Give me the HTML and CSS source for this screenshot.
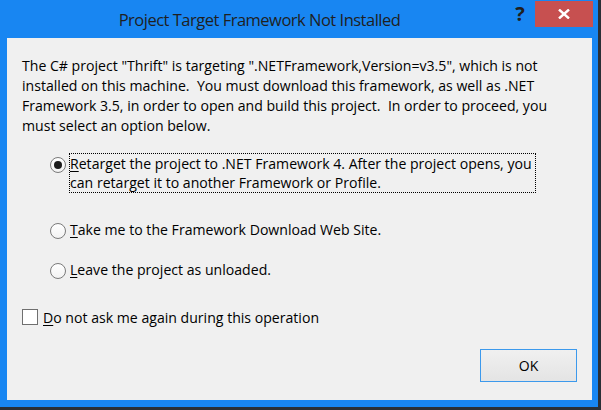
FILE: index.html
```html
<!DOCTYPE html>
<html lang="en">
<head>
<meta charset="utf-8">
<title>Project Target Framework Not Installed</title>
<link rel="stylesheet" href="styles.css">
</head>
<body>
<div class="window">
  <div class="titlebar">
    <div class="title">Project Target Framework Not Installed</div>
    <div class="help">?</div>
    <div class="close">
      <svg width="12" height="10" viewBox="0 0 12 10"><path d="M1 0.5 L11 9.5 M11 0.5 L1 9.5" stroke="#fff" stroke-width="2.4" fill="none"/></svg>
    </div>
  </div>
  <div class="content">
    <div class="msg">
      <span class="line">The C# project "Thrift" is targeting ".NETFramework,Version=v3.5", which is not</span>
      <span class="line">installed on this machine.  You must download this framework, as well as .NET</span>
      <span class="line">Framework 3.5, in order to open and build this project.  In order to proceed, you</span>
      <span class="line">must select an option below.</span>
    </div>
    <div class="options">
      <div class="option">
        <span class="radio checked"></span>
        <span class="label focus"><span class="line"><u>R</u>etarget the project to .NET Framework 4. After the project opens, you</span><span class="line">can retarget it to another Framework or Profile.</span></span>
      </div>
      <div class="option opt2">
        <span class="radio"></span>
        <span class="label"><u>T</u>ake me to the Framework Download Web Site.</span>
      </div>
      <div class="option opt3">
        <span class="radio"></span>
        <span class="label"><u>L</u>eave the project as unloaded.</span>
      </div>
    </div>
    <div class="check">
      <span class="box"></span>
      <span class="check-label"><u>D</u>o not ask me again during this operation</span>
    </div>
    <div class="actions">
      <button class="btn">OK</button>
    </div>
  </div>
</div>
</body>
</html>
```

FILE: styles.css
```css
html, body {
  margin: 0;
  padding: 0;
  width: 601px;
  height: 410px;
  overflow: hidden;
  background: #2a2f36;
}

.window {
  width: 598px;
  height: 407px;
  background: #1886f2;
  display: flex;
  flex-direction: column;
  font-family: "Open Sans", "Noto Sans", sans-serif;
}

.titlebar {
  height: 38px;
  display: flex;
  align-items: flex-start;
  flex: none;
}

.title {
  flex: 1;
  padding-left: 13px;
  padding-top: 8px;
  text-align: center;
  font-size: 16.5px;
  letter-spacing: -0.5px;
  line-height: 24px;
  color: #1f1f1f;
  white-space: nowrap;
}

.help {
  width: 24px;
  margin-right: 3px;
  padding-left: 2px;
  text-align: center;
  font-size: 20px;
  font-weight: 700;
  line-height: 28px;
  color: #1f1f1f;
}

.close {
  width: 58px;
  height: 26px;
  margin-top: 1px;
  margin-right: 5px;
  background: #c75050;
  display: flex;
  align-items: center;
  justify-content: center;
}

.content {
  flex: 1;
  margin: 0 6px 7px 7px;
  background: #f0f0f0;
  padding: 18px 15px 18px 15px;
  display: flex;
  flex-direction: column;
  color: #000;
  font-size: 14.1px;
}

.line {
  display: block;
  white-space: pre;
}

.msg {
  line-height: 20px;
}

.options {
  margin-top: 17px;
  padding-left: 28px;
}

.option {
  display: flex;
  align-items: flex-start;
  gap: 3px;
  line-height: 19px;
}

.opt2 { margin-top: 26px; }
.opt3 { margin-top: 19px; }

.radio {
  width: 14px;
  height: 14px;
  margin-top: 4px;
  border: 1px solid #7a7a7a;
  border-radius: 50%;
  background: linear-gradient(#ffffff, #f2f2f2);
  position: relative;
  flex: none;
}

.radio.checked::after {
  content: "";
  position: absolute;
  left: 3px;
  top: 3px;
  width: 8px;
  height: 8px;
  border-radius: 50%;
  background: #1c1c1c;
}

.label {
  border: 1px solid transparent;
  white-space: nowrap;
  padding-right: 3px;
}

.label.focus {
  border: 1px dotted #000;
}

u {
  text-decoration: underline;
  text-underline-offset: 2px;
}

.check {
  margin-top: 28px;
  display: flex;
  align-items: flex-start;
  gap: 5px;
  line-height: 19px;
}

.box {
  width: 14px;
  height: 14px;
  margin-top: 1px;
  border: 1px solid #6f6f6f;
  background: #fff;
  flex: none;
}

.actions {
  margin-top: auto;
  display: flex;
  justify-content: flex-end;
}

.btn {
  width: 97px;
  height: 33px;
  border: 1px solid #3c99ec;
  background: linear-gradient(#f0f0f0, #e4e4e4);
  font-family: "Open Sans", "Noto Sans", sans-serif;
  font-size: 14px;
  color: #000;
  padding: 0;
}
```
